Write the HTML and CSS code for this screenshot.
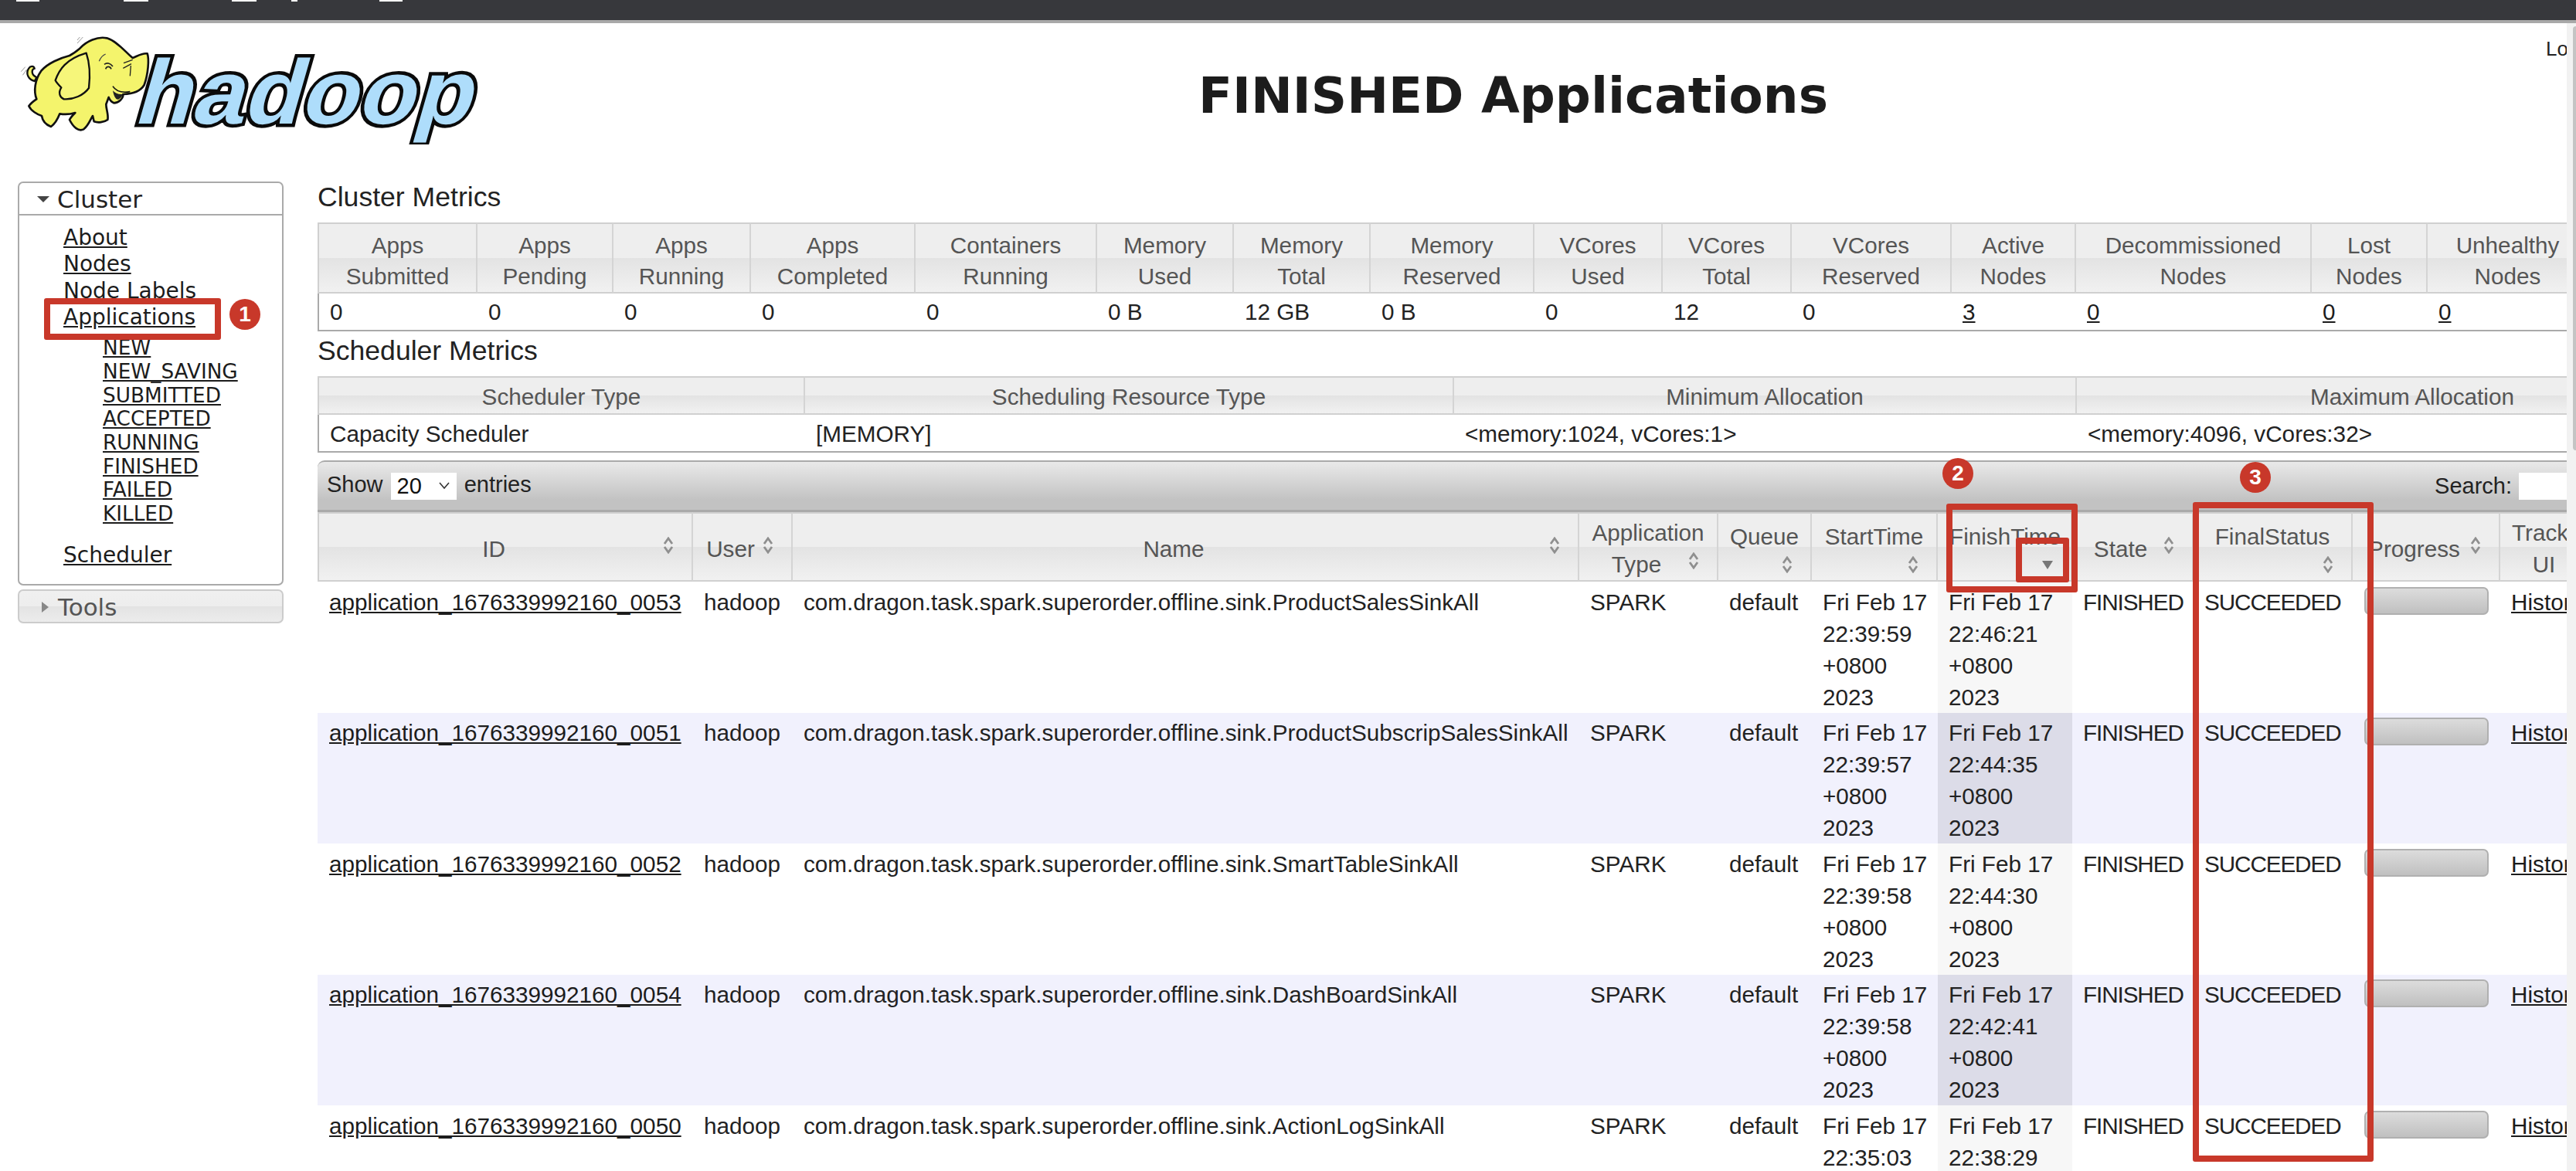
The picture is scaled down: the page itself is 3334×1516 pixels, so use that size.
FILE: index.html
```html
<!DOCTYPE html>
<html>
<head>
  <meta charset="UTF-8">
  <title>FINISHED Applications</title>
  <link rel="stylesheet" href="styles.css">
</head>
<body>
  <svg class="defs" width="0" height="0">
    <symbol id="sort" viewBox="0 0 14 22">
      <path d="M2 9 L7 2 L12 9" fill="none" stroke="#8f8f8f" stroke-width="2.8"/>
      <path d="M2 13 L7 20 L12 13" fill="none" stroke="#8f8f8f" stroke-width="2.8"/>
    </symbol>
  </svg>

  <div class="topbar">
    <span class="tab-mark tm1"></span>
    <span class="tab-mark tm2"></span>
    <span class="tab-mark tm3"></span>
    <span class="tab-mark tm4"></span>
    <span class="tab-mark tm5"></span>
  </div>

  <div class="main">
    <div class="page">
      <div class="header">
        <svg class="logo" width="600" height="142" viewBox="0 0 600 142">
          <g transform="translate(146 115) skewX(-16)">
            <text class="logo-text" textLength="436" lengthAdjust="spacingAndGlyphs">hadoop</text>
          </g>
          <g transform="translate(-5 -5) scale(.3333)">
            <path d="M75 195 C50 190 38 165 52 145 C58 135 72 135 74 146 C62 150 60 170 82 180 Z" fill="#f4f46c" stroke="#111" stroke-width="7"/>
            <path d="M250 68 C275 40 320 20 355 28 C395 40 430 85 455 105 C470 100 490 85 512 88 C520 110 515 170 500 210 C485 235 450 245 418 246 C420 262 400 280 382 280 C370 275 365 265 362 258 L352 285 C352 305 362 325 358 345 C345 355 320 358 305 352 L300 330 C290 345 285 365 265 382 C245 392 225 375 210 345 C215 335 225 325 232 318 C210 325 190 325 172 322 C165 340 155 360 138 372 C120 365 105 350 102 330 C85 325 60 310 52 292 C60 280 72 272 82 265 C70 235 75 190 100 155 C125 125 175 105 210 96 C225 88 238 78 250 68 Z" fill="#f4f46c" stroke="#111" stroke-width="8" stroke-linejoin="round"/>
            <path d="M155 192 C170 150 195 110 275 86 C290 130 290 180 285 222 C265 250 225 268 188 265 C172 258 165 240 178 220 C170 212 160 202 155 192 Z" fill="#f6f67a" stroke="#111" stroke-width="7" stroke-linejoin="round"/>
            <path d="M378 215 C392 238 420 240 445 236" fill="none" stroke="#111" stroke-width="5"/>
            <path d="M378 232 C382 255 392 272 402 265 C412 258 416 252 416 246 C400 248 388 242 378 232 Z" fill="#222"/>
            <path d="M345 130 C355 122 368 125 378 138 M350 148 C355 135 368 138 372 148" fill="none" stroke="#222" stroke-width="5"/>
            <path d="M420 125 L455 112 M418 145 L450 128 M445 175 L448 135" fill="none" stroke="#222" stroke-width="4"/>
            <path d="M325 118 C330 105 338 95 350 90" fill="none" stroke="#444" stroke-width="4"/>
            <path d="M240 48 L262 24 M240 36 L250 24 M22 158 L38 140 M28 172 L44 150" fill="none" stroke="#999" stroke-width="3"/>
          </g>
        </svg>
        <h1 class="title">FINISHED Applications</h1>
        <div class="login">Logged in as: dr.who</div>
      </div>

      <div class="cols">
        <div class="sidebar">
          <div class="nav-box">
            <div class="nav-head"><span class="arrow-down"></span>Cluster</div>
            <div class="nav-body">
              <a class="nav-link" href="#">About</a>
              <a class="nav-link" href="#">Nodes</a>
              <a class="nav-link" href="#">Node Labels</a>
              <a class="nav-link" href="#">Applications</a>
              <div class="sub-list">
                <a class="sub-link" href="#">NEW</a>
                <a class="sub-link" href="#">NEW_SAVING</a>
                <a class="sub-link" href="#">SUBMITTED</a>
                <a class="sub-link" href="#">ACCEPTED</a>
                <a class="sub-link" href="#">RUNNING</a>
                <a class="sub-link" href="#">FINISHED</a>
                <a class="sub-link" href="#">FAILED</a>
                <a class="sub-link" href="#">KILLED</a>
              </div>
              <a class="nav-link" href="#">Scheduler</a>
            </div>
          </div>
          <div class="tools-box"><span class="arrow-right"></span>Tools</div>
        </div>

        <div class="content">
          <h3 class="section-title">Cluster Metrics</h3>
          <table class="info metrics">
            <colgroup>
              <col class="m1"><col class="m2"><col class="m3"><col class="m4"><col class="m5"><col class="m6"><col class="m7"><col class="m8">
              <col class="m9"><col class="m10"><col class="m11"><col class="m12"><col class="m13"><col class="m14"><col class="m15">
            </colgroup>
            <thead>
              <tr>
                <th>Apps Submitted</th><th>Apps Pending</th><th>Apps Running</th><th>Apps Completed</th><th>Containers Running</th>
                <th>Memory Used</th><th>Memory Total</th><th>Memory Reserved</th><th>VCores Used</th><th>VCores Total</th>
                <th>VCores Reserved</th><th>Active Nodes</th><th>Decommissioned Nodes</th><th>Lost Nodes</th><th>Unhealthy Nodes</th>
              </tr>
            </thead>
            <tbody>
              <tr>
                <td>0</td><td>0</td><td>0</td><td>0</td><td>0</td><td>0 B</td><td>12 GB</td><td>0 B</td><td>0</td><td>12</td><td>0</td>
                <td><a href="#">3</a></td><td><a href="#">0</a></td><td><a href="#">0</a></td><td><a href="#">0</a></td>
              </tr>
            </tbody>
          </table>

          <h3 class="section-title second">Scheduler Metrics</h3>
          <table class="info scheduler">
            <colgroup><col class="s1"><col class="s2"><col class="s3"><col class="s4"></colgroup>
            <thead>
              <tr><th>Scheduler Type</th><th>Scheduling Resource Type</th><th>Minimum Allocation</th><th>Maximum Allocation</th></tr>
            </thead>
            <tbody>
              <tr><td>Capacity Scheduler</td><td>[MEMORY]</td><td>&lt;memory:1024, vCores:1&gt;</td><td>&lt;memory:4096, vCores:32&gt;</td></tr>
            </tbody>
          </table>

          <div class="table-bar">
            <div class="length">Show
              <span class="select">20
                <svg width="16" height="10" viewBox="0 0 16 10"><path d="M2 1 L8 8 L14 1" fill="none" stroke="#333" stroke-width="1.6"/></svg>
              </span>
              entries</div>
            <div class="search">Search: <input class="search-input" type="text"></div>
          </div>

          <table class="apps">
            <colgroup>
              <col class="a1"><col class="a2"><col class="a3"><col class="a4"><col class="a5"><col class="a6">
              <col class="a7"><col class="a8"><col class="a9"><col class="a10"><col class="a11">
            </colgroup>
            <thead>
              <tr>
                <th>ID<span class="sort"><svg width="14" height="22"><use href="#sort"/></svg></span></th>
                <th>User<span class="sort"><svg width="14" height="22"><use href="#sort"/></svg></span></th>
                <th>Name<span class="sort"><svg width="14" height="22"><use href="#sort"/></svg></span></th>
                <th>Application Type<span class="sort"><svg width="14" height="22"><use href="#sort"/></svg></span></th>
                <th>Queue<span class="sort"><svg width="14" height="22"><use href="#sort"/></svg></span></th>
                <th>StartTime<span class="sort"><svg width="14" height="22"><use href="#sort"/></svg></span></th>
                <th>FinishTime<span class="sort"><svg width="14" height="14" viewBox="0 0 14 14"><path d="M0 2 H14 L7 13 Z" fill="#777"/></svg></span></th>
                <th>State<span class="sort"><svg width="14" height="22"><use href="#sort"/></svg></span></th>
                <th>FinalStatus<span class="sort"><svg width="14" height="22"><use href="#sort"/></svg></span></th>
                <th>Progress<span class="sort"><svg width="14" height="22"><use href="#sort"/></svg></span></th>
                <th>Tracking UI</th>
              </tr>
            </thead>
            <tbody>
              <tr class="odd">
                <td><a href="#">application_1676339992160_0053</a></td><td>hadoop</td>
                <td>com.dragon.task.spark.superorder.offline.sink.ProductSalesSinkAll</td><td>SPARK</td><td>default</td>
                <td>Fri Feb 17 22:39:59 +0800 2023</td><td class="sorted">Fri Feb 17 22:46:21 +0800 2023</td>
                <td class="caps">FINISHED</td><td class="caps">SUCCEEDED</td><td><div class="progress"></div></td><td><a href="#">History</a></td>
              </tr>
              <tr class="even">
                <td><a href="#">application_1676339992160_0051</a></td><td>hadoop</td>
                <td>com.dragon.task.spark.superorder.offline.sink.ProductSubscripSalesSinkAll</td><td>SPARK</td><td>default</td>
                <td>Fri Feb 17 22:39:57 +0800 2023</td><td class="sorted">Fri Feb 17 22:44:35 +0800 2023</td>
                <td class="caps">FINISHED</td><td class="caps">SUCCEEDED</td><td><div class="progress"></div></td><td><a href="#">History</a></td>
              </tr>
              <tr class="odd">
                <td><a href="#">application_1676339992160_0052</a></td><td>hadoop</td>
                <td>com.dragon.task.spark.superorder.offline.sink.SmartTableSinkAll</td><td>SPARK</td><td>default</td>
                <td>Fri Feb 17 22:39:58 +0800 2023</td><td class="sorted">Fri Feb 17 22:44:30 +0800 2023</td>
                <td class="caps">FINISHED</td><td class="caps">SUCCEEDED</td><td><div class="progress"></div></td><td><a href="#">History</a></td>
              </tr>
              <tr class="even">
                <td><a href="#">application_1676339992160_0054</a></td><td>hadoop</td>
                <td>com.dragon.task.spark.superorder.offline.sink.DashBoardSinkAll</td><td>SPARK</td><td>default</td>
                <td>Fri Feb 17 22:39:58 +0800 2023</td><td class="sorted">Fri Feb 17 22:42:41 +0800 2023</td>
                <td class="caps">FINISHED</td><td class="caps">SUCCEEDED</td><td><div class="progress"></div></td><td><a href="#">History</a></td>
              </tr>
              <tr class="odd">
                <td><a href="#">application_1676339992160_0050</a></td><td>hadoop</td>
                <td>com.dragon.task.spark.superorder.offline.sink.ActionLogSinkAll</td><td>SPARK</td><td>default</td>
                <td>Fri Feb 17 22:35:03 +0800 2023</td><td class="sorted">Fri Feb 17 22:38:29 +0800 2023</td>
                <td class="caps">FINISHED</td><td class="caps">SUCCEEDED</td><td><div class="progress"></div></td><td><a href="#">History</a></td>
              </tr>
            </tbody>
          </table>
        </div>
      </div>
    </div>
    <div class="scrollbar"><div class="scroll-thumb"></div></div>
  </div>

  <!-- red marks drawn over the screenshot -->
  <div class="mark box-apps"></div>
  <div class="badge badge1">1</div>
  <div class="mark box-finish"></div>
  <div class="mark box-arrow"></div>
  <div class="badge badge2">2</div>
  <div class="mark box-status"></div>
  <div class="badge badge3">3</div>
</body>
</html>
```

FILE: styles.css
```css
* {
  box-sizing: border-box;
}

html, body {
  margin: 0;
  height: 1516px;
  overflow: hidden;
}

body {
  position: relative;
  background-color: white;
  color: #222;
  font-family: "Liberation Sans", Arial, sans-serif;
  font-size: 29.7px;
}

a {
  color: #1c1c1c;
}

.defs {
  position: absolute;
}

/* top bar */
.topbar {
  display: flex;
  height: 30px;
  background-color: #37383c;
  border-bottom: 4px solid #a9a9a9;
}

.tab-mark {
  height: 2px;
  background-color: white;
}

.tm1 { width: 30px; margin-left: 21px; }
.tm2 { width: 32px; margin-left: 109px; }
.tm3 { width: 32px; margin-left: 108px; }
.tm4 { width: 8px; margin-left: 45px; }
.tm5 { width: 30px; margin-left: 106px; }

.main {
  display: flex;
  height: 1486px;
}

.page {
  width: 3322px;
  overflow: hidden;
}

.scrollbar {
  flex: 1;
  background-color: #f2f2f2;
  padding: 4px 0 0 8px;
}

.scroll-thumb {
  height: 549px;
  background-color: #c4c4c4;
  border-radius: 8px 0 0 8px;
}

/* header */
.header {
  display: flex;
  height: 205px;
}

.logo {
  flex: none;
  margin: 15px 0 0 25px;
}

.logo-text {
  font-family: "Liberation Sans", Arial, sans-serif;
  font-weight: bold;
  font-size: 118px;
  fill: #aeddfb;
  stroke: #0a0a0a;
  stroke-width: 9px;
  stroke-linejoin: miter;
  paint-order: stroke;
}

.title {
  flex: 1;
  margin: 62px 0 0 0;
  padding-right: 3px;
  text-align: center;
  font-family: "DejaVu Sans", Verdana, sans-serif;
  font-size: 64.4px;
  line-height: 64px;
  color: #1c1c1c;
}

.login {
  flex: none;
  width: 27px;
  overflow: hidden;
  white-space: nowrap;
  font-size: 26px;
  line-height: 30px;
  margin-top: 18px;
  color: #222;
}

/* columns */
.cols {
  display: flex;
}

.sidebar {
  flex: none;
  width: 344px;
  margin: 0 44px 0 23px;
  font-family: "DejaVu Sans", Verdana, sans-serif;
}

.nav-box {
  height: 523px;
  border: 2px solid #aaa;
  border-radius: 7px;
}

.nav-head {
  display: flex;
  align-items: center;
  height: 42px;
  border-bottom: 2px solid #aaa;
  padding: 1px 0 0 23px;
  font-size: 31px;
  color: #222;
}

.arrow-down {
  width: 0;
  height: 0;
  margin-right: 10px;
  border: 8px solid transparent;
  border-top: 8px solid #444;
  border-bottom: 0;
}

.nav-body {
  padding: 12px 0 0 57px;
}

.nav-link {
  display: table;
  font-size: 28px;
  line-height: 34.3px;
}

.sub-list {
  margin: 7px 0 21px 51px;
}

.sub-link {
  display: table;
  font-size: 26.3px;
  line-height: 30.7px;
}

.tools-box {
  display: flex;
  align-items: center;
  height: 44px;
  margin-top: 5px;
  padding: 1px 0 0 29px;
  border: 2px solid #ccc;
  border-radius: 7px;
  background: linear-gradient(#f0f0f0 0, #ededed 50%, #e3e3e3 50%, #ececec 100%);
  font-size: 31px;
  color: #555;
}

.arrow-right {
  width: 0;
  height: 0;
  margin-right: 12px;
  border: 7px solid transparent;
  border-left: 9px solid #888;
  border-right: 0;
}

/* content */
.content {
  flex: 1;
  min-width: 0;
  overflow: hidden;
}

.section-title {
  margin: 0 0 13px 0;
  padding-top: 1px;
  font-size: 35.6px;
  font-weight: normal;
  line-height: 39px;
  color: #222;
}

.section-title.second {
  margin-top: 5px;
  padding-top: 0;
  line-height: 40px;
}

table {
  border-collapse: separate;
  border-spacing: 0;
  table-layout: fixed;
}

th {
  font-weight: normal;
  color: #555;
  border-top: 2px solid #d0d0d0;
  border-right: 2px solid #d4d4d4;
  border-bottom: 2px solid #d0d0d0;
  line-height: 40px;
  background: linear-gradient(#eeeeee 0, #eeeeee 50%, #e3e3e3 50%, #f1f1f1 100%);
}

th:first-child {
  border-left: 2px solid #d0d0d0;
}

.info th {
  padding: 8px 15px 0;
}

.info td {
  padding: 0 15px 0 14px;
  height: 49px;
  line-height: 41px;
  border-bottom: 2px solid #aaa;
}

.info td:first-child {
  border-left: 2px solid #aaa;
}

.metrics { width: 2940px; }
.m1 { width: 207px; }
.m2 { width: 176px; }
.m3 { width: 178px; }
.m4 { width: 213px; }
.m5 { width: 235px; }
.m6 { width: 177px; }
.m7 { width: 177px; }
.m8 { width: 212px; }
.m9 { width: 166px; }
.m10 { width: 167px; }
.m11 { width: 207px; }
.m12 { width: 161px; }
.m13 { width: 305px; }
.m14 { width: 150px; }
.m15 { width: 209px; }

.scheduler { width: 3147px; }
.scheduler th { height: 50px; padding-top: 4px; }
.scheduler td { height: 49px; padding-top: 2px; }
.s1 { width: 631px; }
.s2 { width: 840px; }
.s3 { width: 806px; }
.s4 { width: 870px; }

.table-bar {
  display: flex;
  justify-content: space-between;
  align-items: center;
  height: 67px;
  margin-top: 10px;
  padding: 0 0 0 12px;
  border-top: 2px solid #aaa;
  border-bottom: 3px solid #aaa;
  border-top-left-radius: 9px;
  background: linear-gradient(#e9e9e9, #c2c2c2 80%, #c2c2c2);
  font-size: 29px;
}

.select {
  display: inline-flex;
  justify-content: space-between;
  align-items: center;
  width: 85px;
  height: 35px;
  margin: 0 2px;
  padding: 0 8px 0 8px;
  background-color: white;
  color: #111;
  vertical-align: middle;
}

.search {
  display: flex;
  align-items: center;
  gap: 9px;
}

.search-input {
  width: 62px;
  height: 35px;
  border: none;
  background-color: white;
}

.apps { width: 2940px; }
.a1 { width: 486px; }
.a2 { width: 129px; }
.a3 { width: 1018px; }
.a4 { width: 180px; }
.a5 { width: 121px; }
.a6 { width: 163px; }
.a7 { width: 174px; }
.a8 { width: 157px; }
.a9 { width: 206px; }
.a10 { width: 191px; }
.a11 { width: 115px; }

.apps th {
  height: 90px;
  padding: 4px 15px 0;
  line-height: 41px;
}

.sort {
  float: right;
  display: flex;
  justify-content: center;
  align-items: center;
  width: 30px;
  height: 32px;
}

.apps td {
  height: 169.5px;
  padding: 5.5px 6px 0 14px;
  line-height: 41px;
  vertical-align: top;
}

.apps td:first-child {
  padding-left: 15px;
}

.apps .caps {
  letter-spacing: -1.1px;
}

.even td {
  background-color: #f1f1fd;
}

.odd .sorted {
  background-color: #f7f7f7;
}

.even .sorted {
  background-color: #dcdce8;
}

.progress {
  width: 161px;
  height: 36px;
  margin-top: 1px;
  margin-left: 1px;
  border: 2px solid #b0b0b0;
  border-radius: 7px;
  background: linear-gradient(#dcdcdc, #c0c0c0);
}

/* red annotation marks */
.mark {
  position: absolute;
  border: 8px solid #c8382a;
  border-radius: 3px;
}

.box-apps { left: 57px; top: 386px; width: 229px; height: 54px; }
.box-finish { left: 2519px; top: 652px; width: 170px; height: 115px; }
.box-arrow { left: 2609px; top: 696px; width: 69px; height: 58px; }
.box-status { left: 2838px; top: 650px; width: 234px; height: 854px; }

.badge {
  position: absolute;
  width: 40px;
  height: 40px;
  border-radius: 50%;
  background-color: #c8382a;
  color: white;
  font-weight: bold;
  font-size: 28px;
  line-height: 40px;
  text-align: center;
}

.badge1 { left: 297px; top: 387px; }
.badge2 { left: 2514px; top: 593px; }
.badge3 { left: 2899px; top: 598px; }
```
